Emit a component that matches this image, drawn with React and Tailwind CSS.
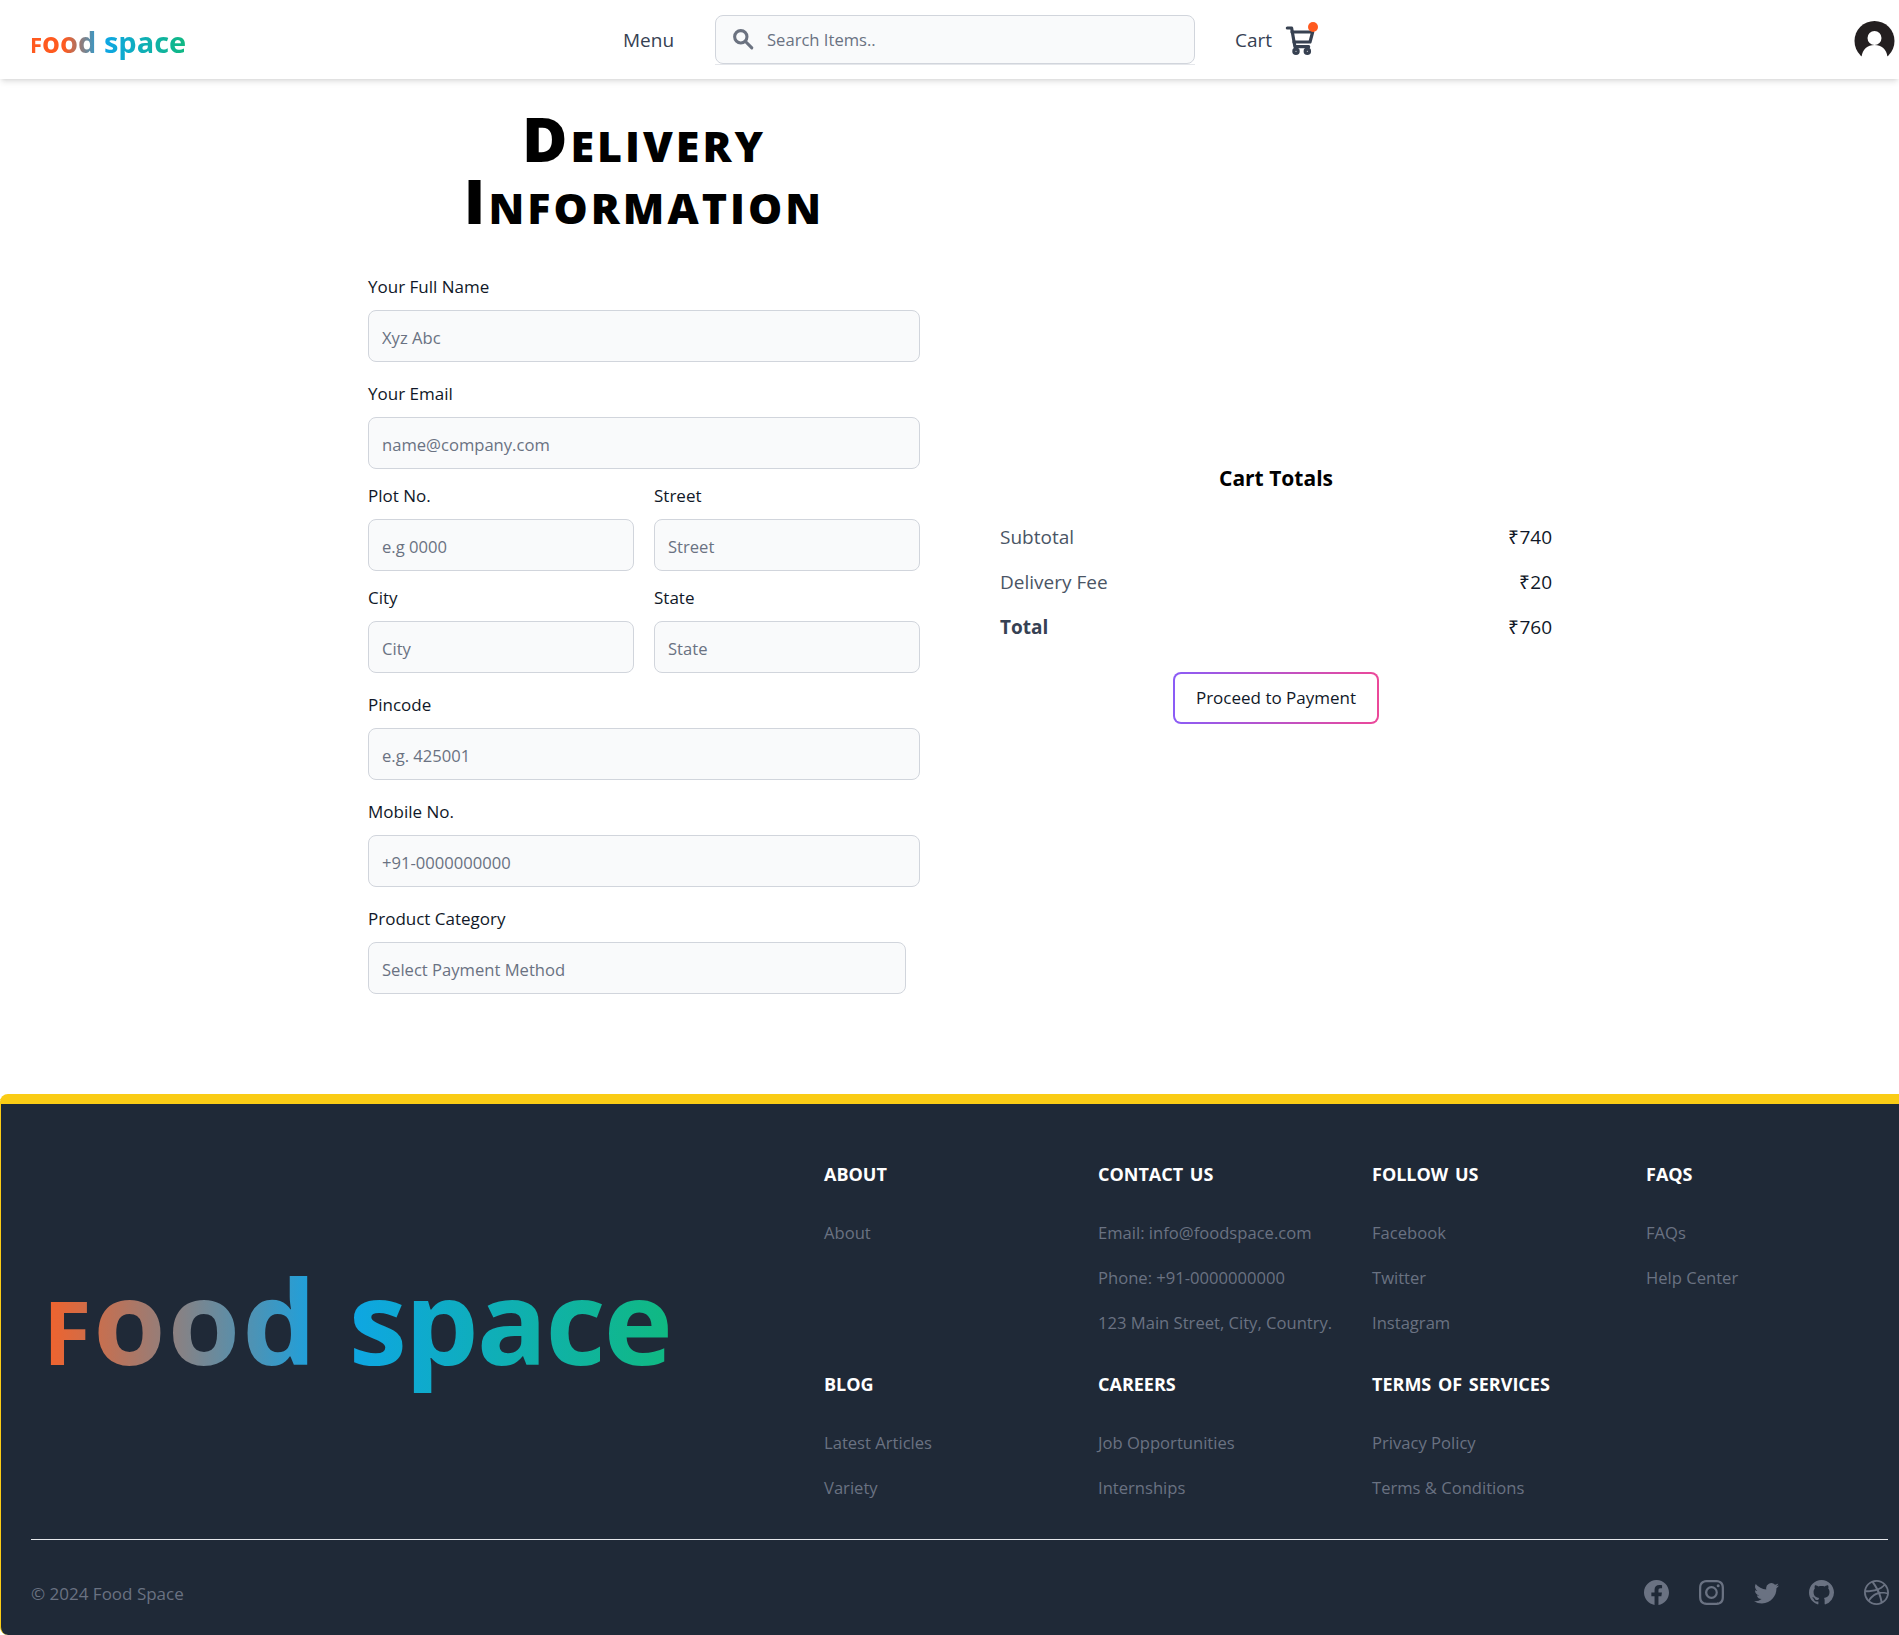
import { BsFacebook, BsInstagram, BsTwitter, BsGithub, BsDribbble } from "react-icons/bs";

const footerCols = [
  { title: "About", links: ["About"] },
  { title: "Contact Us", links: ["Email: info@foodspace.com", "Phone: +91-0000000000", "123 Main Street, City, Country."] },
  { title: "Follow Us", links: ["Facebook", "Twitter", "Instagram"] },
  { title: "FAQs", links: ["FAQs", "Help Center"] },
  { title: "Blog", links: ["Latest Articles", "Variety"] },
  { title: "Careers", links: ["Job Opportunities", "Internships"] },
  { title: "Terms of Services", links: ["Privacy Policy", "Terms & Conditions"] },
];

function Logo({ className, capClass, foodClass, spaceClass }) {
  return (
    <div className={`inline-block whitespace-nowrap bg-linear-to-r/srgb bg-clip-text font-bold text-transparent ${className}`}>
      <span className={foodClass}>
        <span className={capClass}>F</span>ood
      </span>{" "}
      <span className={spaceClass}>space</span>
    </div>
  );
}

function Field({ label, placeholder, className = "mb-[19px]" }) {
  return (
    <div className={className}>
      <label className="mb-[11px] block h-6 text-[17px] leading-6 font-medium text-gray-900">{label}</label>
      <input
        placeholder={placeholder}
        className="h-[52px] w-full rounded-lg border border-gray-300 bg-gray-50 px-[13px] pt-[2px] text-[16.6px] text-gray-900 outline-none placeholder:text-gray-500"
      />
    </div>
  );
}

function CartIcon() {
  return (
    <svg viewBox="0 0 24 24" fill="none" stroke="#374151" strokeWidth="2.4" strokeLinecap="round" strokeLinejoin="round" className="h-8 w-8">
      <path d="M2.5 3h3.2l2.5 14h10.3" />
      <path d="M6 6h15.5l-2 7.5H7.5" />
      <circle cx="9" cy="20.5" r="1.6" />
      <circle cx="17.5" cy="20.5" r="1.6" />
    </svg>
  );
}

export default function App() {
  return (
    <div className="w-[1899px] overflow-hidden bg-white font-['Open_Sans',sans-serif]">
      {/* NAVBAR */}
      <nav className="relative z-10 flex h-[79px] items-center bg-white shadow-md">
        <div className="w-[623px] pt-1.5 pl-[30px]">
          <Logo
            className="from-[#ff5a1f] from-[22%] via-[#0ea5e9] via-[46%] to-[#10b981] text-[29px] leading-[40px]"
            capClass="text-[22px]"
          />
        </div>
        <span className="w-[92px] pt-0.5 text-[19px] font-medium text-gray-700">Menu</span>
        <div className="w-[480px] border-b border-gray-200">
          <div className="flex h-[49px] items-center gap-[13px] rounded-lg border border-gray-300 bg-gray-50 pl-4">
            <svg viewBox="0 0 20 20" fill="none" stroke="#6b7280" strokeWidth="2.8" strokeLinecap="round" className="h-[22px] w-[22px]">
              <circle cx="8" cy="8" r="5.6" />
              <path d="M12.5 12.5 18 18" />
            </svg>
            <span className="pt-[2px] text-[16.6px] text-gray-500">Search Items..</span>
          </div>
        </div>
        <span className="ml-10 pt-0.5 text-[19px] font-medium text-gray-700">Cart</span>
        <div className="relative ml-3">
          <CartIcon />
          <span className="absolute -top-0.5 -right-0.5 h-2.5 w-2.5 rounded-full bg-[#ff5a1f]" />
        </div>
        <svg viewBox="0 0 40 40" className="absolute top-[21px] right-[4px] h-[40px] w-[41px]">
          <circle cx="20" cy="20" r="20" fill="#231f20" />
          <circle cx="20" cy="17" r="7" fill="#fff" />
          <path d="M7 36c1-8 6-12 13-12s12 4 13 12l-4 4H11z" fill="#fff" />
        </svg>
      </nav>

      {/* CONTENIDO */}
      <main className="flex h-[1015px] gap-20 pl-[368px]">
        <form className="w-[552px] pt-[28px]">
          <h1 className="mx-auto mb-[44px] w-[420px] text-center text-[62px] leading-[62px] font-extrabold tracking-[3px] text-black [font-variant:small-caps]">
            Delivery Information
          </h1>
          <Field label="Your Full Name" placeholder="Xyz Abc" className="mb-[20px]" />
          <Field label="Your Email" placeholder="name@company.com" className="mb-[15px]" />
          <div className="grid grid-cols-2 gap-x-5">
            <Field label="Plot No." placeholder="e.g 0000" className="mb-[15px]" />
            <Field label="Street" placeholder="Street" className="mb-[15px]" />
            <Field label="City" placeholder="City" className="mb-[20px]" />
            <Field label="State" placeholder="State" className="mb-[20px]" />
          </div>
          <Field label="Pincode" placeholder="e.g. 425001" className="mb-[20px]" />
          <Field label="Mobile No." placeholder="+91-0000000000" className="mb-[20px]" />
          <Field label="Product Category" placeholder="Select Payment Method" className="w-[538px]" />
        </form>

        <section className="w-[552px] pt-[383px]">
          <h2 className="mb-[21px] text-center text-[21px] leading-8 font-bold text-black">Cart Totals</h2>
          <div className="flex h-[45px] items-center justify-between text-[19px] text-gray-600">
            <span>Subtotal</span>
            <span className="font-medium text-gray-900">₹740</span>
          </div>
          <div className="flex h-[45px] items-center justify-between text-[19px] text-gray-600">
            <span>Delivery Fee</span>
            <span className="font-medium text-gray-900">₹20</span>
          </div>
          <div className="flex h-[45px] items-center justify-between text-[19px] text-gray-700">
            <span className="font-bold">Total</span>
            <span className="font-medium text-gray-900">₹760</span>
          </div>
          <div className="mt-[22px] flex justify-center">
            <button type="button" className="h-[52px] w-[206px] rounded-lg bg-linear-to-r/srgb from-[#8b5cf6] to-[#ec4899] p-[2px]">
              <span className="flex h-full items-center justify-center rounded-md bg-white text-[17px] font-medium text-gray-900">
                Proceed to Payment
              </span>
            </button>
          </div>
        </section>
      </main>

      {/* FOOTER */}
      <footer className="h-[541px] rounded-l-lg border-t-[10px] border-l border-[#facc15] bg-[#1f2937]">
        <div className="flex h-[435px] pt-[58px] pl-[35px]">
          <div className="flex w-[788px] items-center pb-[50px] pl-[7px]">
            <Logo
              className="from-[#f4622a] via-[#0ea5e9] via-[46%] to-[#10b981] text-[117px] leading-[150px]"
              capClass="text-[88px]"
              foodClass="tracking-[2px]"
              spaceClass="tracking-[-2px]"
            />
          </div>
          <div className="grid grid-cols-[274px_274px_274px_1fr] content-start gap-y-[36px]">
            {footerCols.map((col) => (
              <div key={col.title} className="h-[174px] last:h-auto">
                <h3 className="mb-[35px] text-[18px] leading-6 font-bold [word-spacing:2px] text-white uppercase">{col.title}</h3>
                {col.links.map((l) => (
                  <p key={l} className="mb-[21px] text-[16.6px] leading-6 whitespace-nowrap text-gray-500">{l}</p>
                ))}
              </div>
            ))}
          </div>
        </div>
        <hr className="mr-[11px] ml-[30px] border-gray-200" />
        <div className="flex items-center justify-between pt-[39px] pr-[10px] pl-[30px]">
          <span className="mt-[2px] text-[17px] text-gray-500">© 2024 Food Space</span>
          <div className="flex gap-[30px] text-gray-500">
            <BsFacebook size={25} />
            <BsInstagram size={25} />
            <BsTwitter size={25} />
            <BsGithub size={25} />
            <BsDribbble size={25} />
          </div>
        </div>
      </footer>
    </div>
  );
}
